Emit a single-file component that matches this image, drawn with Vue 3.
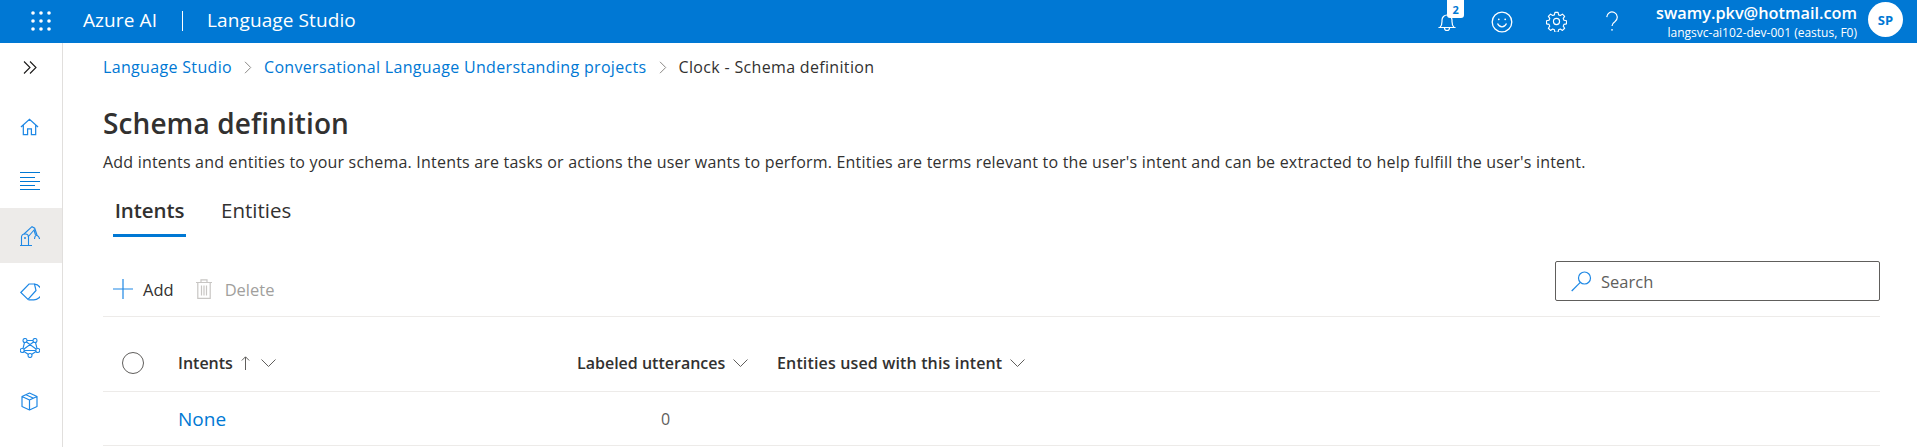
<script setup>
const navItems = [
  { id: 'home', active: false },
  { id: 'list', active: false },
  { id: 'robot', active: true },
  { id: 'tag', active: false },
  { id: 'net', active: false },
  { id: 'box', active: false },
  { id: 'more', active: false }
]
</script>

<template>
  <div class="page">
    <header class="topbar">
      <div class="waffle">
        <svg width="20" height="20" viewBox="0 0 20 20" fill="#fff">
          <g>
            <circle cx="2" cy="2" r="1.8" /><circle cx="10" cy="2" r="1.8" /><circle cx="18" cy="2" r="1.8" />
            <circle cx="2" cy="10" r="1.8" /><circle cx="10" cy="10" r="1.8" /><circle cx="18" cy="10" r="1.8" />
            <circle cx="2" cy="18" r="1.8" /><circle cx="10" cy="18" r="1.8" /><circle cx="18" cy="18" r="1.8" />
          </g>
        </svg>
      </div>
      <span class="brand">Azure AI</span>
      <span class="sep"></span>
      <span class="brand">Language Studio</span>
      <div class="spacer"></div>
      <div class="top-icon bell">
        <svg width="20" height="22" viewBox="0 0 20 22" fill="none" stroke="#fff" stroke-width="1.2">
          <path d="M3 16.5c1.5-1.5 2-3 2-6V9a5 5 0 0 1 10 0v1.500c0 3 .5 4.500 2 6z" />
          <path d="M1.500 16.500h17M7.500 17a2.500 2.500 0 0 0 5 0" />
        </svg>
        <span class="badge">2</span>
      </div>
      <div class="top-icon">
        <svg width="22" height="22" viewBox="0 0 22 22" fill="none" stroke="#fff" stroke-width="1.3">
          <circle cx="11" cy="11" r="9.800" />
          <path d="M6.500 12.500c1 2.200 2.700 3.300 4.500 3.300s3.500-1.100 4.500-3.300" />
          <circle cx="7.800" cy="8.300" r=".9" fill="#fff" stroke="none" />
          <circle cx="14.200" cy="8.300" r=".9" fill="#fff" stroke="none" />
        </svg>
      </div>
      <div class="top-icon">
        <svg width="21" height="21" viewBox="0 0 24 24" fill="none" stroke="#fff" stroke-width="1.300" stroke-linejoin="round">
          <circle cx="12" cy="12" r="3.500" />
          <path d="M10.200 1.500h3.600l.6 2.900 2 .8 2.400-1.600 2.500 2.500-1.600 2.400.8 2 2.900.6v3.600l-2.900.6-.8 2 1.600 2.400-2.500 2.500-2.400-1.600-2 .8-.6 2.900h-3.600l-.6-2.900-2-.8-2.400 1.600-2.500-2.500 1.600-2.400-.8-2-2.900-.6v-3.600l2.900-.6.8-2-1.600-2.400 2.500-2.500 2.400 1.600 2-.8z" />
        </svg>
      </div>
      <div class="top-icon">
        <svg width="14" height="21" viewBox="0 0 16 24" fill="none" stroke="#fff" stroke-width="1.400">
          <path d="M2 7a6 6 0 1 1 9.500 4.900C9 13.600 8 14.500 8 17" />
          <circle cx="8" cy="21.500" r="1" fill="#fff" stroke="none" />
        </svg>
      </div>
      <div class="account">
        <div class="email">swamy.pkv@hotmail.com</div>
        <div class="resource">langsvc-ai102-dev-001 (eastus, F0)</div>
      </div>
      <div class="avatar">SP</div>
    </header>

    <div class="body">
      <nav class="sidebar">
        <div class="collapse">
          <svg width="14" height="13" viewBox="0 0 14 13" fill="none" stroke="#1b1a19" stroke-width="1.100">
            <path d="M1 .5 7 6.500 1 12.500M7 .5 13 6.500 7 12.500" />
          </svg>
        </div>
        <div v-for="item in navItems" :key="item.id" class="nav-item" :class="[item.id, { active: item.active }]">
          <svg v-if="item.id === 'home'" width="19" height="18" viewBox="0 0 20 18" fill="none" stroke="#1e88e5" stroke-width="1.300">
            <path d="M1 9 10 1l9 8M3.500 7v10h4.500v-6h4v6h4.500V7" />
          </svg>
          <svg v-else-if="item.id === 'list'" width="20" height="18" viewBox="0 0 20 18" fill="none" stroke="#0078d4" stroke-width="1">
            <path d="M0 .5h20M0 5.500h15M0 9.500h20M0 13.500h15M0 17.500h20" />
          </svg>
          <svg v-else-if="item.id === 'robot'" width="20" height="20" viewBox="0 0 20 20" fill="none" stroke="#1e88e5" stroke-width="1.100">
            <path d="M0 19.500h12M1.500 19v-8a3 3 0 0 1 3-3h1a3 3 0 0 1 3 3v8" />
            <path d="M4 8 12 .7l2.700 1.500L17 9M8 11l6-7 1.500 5" />
            <path d="M14.500 13c0-2 1-3.500 2-4 1 .5 3 2 3 4" />
            <circle cx="5" cy="12" r="1" fill="#1e88e5" stroke="none" />
          </svg>
          <svg v-else-if="item.id === 'tag'" width="20" height="18" viewBox="0 0 20 18" fill="none" stroke="#1e88e5" stroke-width="1.200">
            <path d="M.8 9.500 9 1h5.500l1.500 6.500L8 16.500z" />
            <path d="M14.500 1.200A7.800 7.800 0 0 1 13 16.800H8.500" />
          </svg>
          <svg v-else-if="item.id === 'net'" width="20" height="20" viewBox="0 0 20 20" fill="none" stroke="#1e88e5" stroke-width="1.100">
            <circle cx="5" cy="2.500" r="2" /><circle cx="15" cy="2.500" r="2" />
            <circle cx="2.200" cy="12.500" r="2" /><circle cx="17.800" cy="12.500" r="2" /><circle cx="10" cy="17.500" r="2" />
            <path d="M7 2.500h6M4.500 4.500 3 10.500M15.500 4.500l1.500 6M4 13.500l4.500 3M16 13.500l-4.500 3M4.200 12.500h11.600M6.500 4l9.500 7M13.500 4 4 11" />
          </svg>
          <svg v-else-if="item.id === 'box'" width="17" height="19" viewBox="0 0 17 19" fill="none" stroke="#1e88e5" stroke-width="1.200" stroke-linejoin="round">
            <path d="M8.500 1 16 4.500v10L8.500 18 1 14.500v-10zM1 4.500 8.500 8 16 4.500M8.500 8v10M5 2.700l7.500 3.500" />
          </svg>
          <svg v-else width="18" height="18" viewBox="0 0 18 18" fill="none" stroke="#1e88e5" stroke-width="1.200">
            <path d="M0 .6h4.500M6.500 .6h4.500M13 .6h5" />
          </svg>
        </div>
      </nav>

      <main class="content">
        <div class="crumbs">
          <a class="crumb">Language Studio</a>
          <svg class="crumb-sep" width="8" height="13" viewBox="0 0 8 13" fill="none" stroke="#8a8886" stroke-width="1"><path d="M1 .8 6.700 6.500 1 12.200" /></svg>
          <a class="crumb">Conversational Language Understanding projects</a>
          <svg class="crumb-sep" width="8" height="13" viewBox="0 0 8 13" fill="none" stroke="#8a8886" stroke-width="1"><path d="M1 .8 6.700 6.500 1 12.200" /></svg>
          <span class="crumb-current">Clock - Schema definition</span>
        </div>

        <h1 class="title">Schema definition</h1>
        <p class="desc">Add intents and entities to your schema. Intents are tasks or actions the user wants to perform. Entities are terms relevant to the user's intent and can be extracted to help fulfill the user's intent.</p>

        <div class="tabs">
          <div class="tab selected">Intents</div>
          <div class="tab">Entities</div>
        </div>

        <div class="toolbar">
          <button class="tool">
            <svg width="20" height="20" viewBox="0 0 20 20" stroke="#1e88e5" stroke-width="1.200"><path d="M10 0v20M0 10h20" /></svg>
            <span>Add</span>
          </button>
          <button class="tool disabled">
            <svg width="16" height="20" viewBox="0 0 16 20" fill="none" stroke="#c8c6c4" stroke-width="1.200">
              <path d="M0 3.500h16M5 3V.8h6V3M1.800 3.500V19.400h12.400V3.500M5.500 6.500v10M8 6.500v10M10.500 6.500v10" />
            </svg>
            <span>Delete</span>
          </button>
          <div class="spacer"></div>
          <div class="search">
            <svg width="21" height="21" viewBox="0 0 21 21" fill="none" stroke="#1e88e5" stroke-width="1.200">
              <circle cx="13.500" cy="7" r="6" /><path d="M9.300 11.300.7 20" />
            </svg>
            <span>Search</span>
          </div>
        </div>

        <div class="grid head">
          <div class="check"><span class="circle"></span></div>
          <div class="th">
            <span>Intents</span>
            <svg width="9" height="14" viewBox="0 0 9 14" fill="none" stroke="#605e5c" stroke-width="1"><path d="M4.500 14V1M.8 4.500 4.500 .8l3.700 3.700" /></svg>
            <svg class="chev" width="15" height="8" viewBox="0 0 15 8" fill="none" stroke="#605e5c" stroke-width="1"><path d="M.5 .5l7 7 7-7" /></svg>
          </div>
          <div class="th">
            <span>Labeled utterances</span>
            <svg width="15" height="8" viewBox="0 0 15 8" fill="none" stroke="#605e5c" stroke-width="1"><path d="M.5 .5l7 7 7-7" /></svg>
          </div>
          <div class="th">
            <span class="wide">Entities used with this intent</span>
            <svg width="15" height="8" viewBox="0 0 15 8" fill="none" stroke="#605e5c" stroke-width="1"><path d="M.5 .5l7 7 7-7" /></svg>
          </div>
        </div>
        <div class="grid row">
          <div></div>
          <a class="name">None</a>
          <div class="count">0</div>
          <div></div>
        </div>
      </main>
    </div>
  </div>
</template>

<style>
html, body { margin: 0; height: 447px; overflow: hidden; background: #fff; }
</style>

<style scoped>
.page { width: 1917px; height: 447px; overflow: hidden; font-family: "Open Sans", "Noto Sans", sans-serif; color: #323130; }
.topbar { height: 43px; background: #0078d4; color: #fff; display: flex; align-items: center; padding-left: 31px; padding-right: 14px; box-sizing: border-box; }
.waffle { width: 20px; height: 20px; margin: 0 32px 2px 0; }
.brand { font-size: 19px; letter-spacing: .1px; white-space: nowrap; margin-bottom: 3px; }
.sep { width: 1px; height: 20px; background: #fff; margin: 0 24px 2px 25px; }
.spacer { flex: 1; }
.top-icon { width: 55px; height: 43px; display: flex; align-items: center; justify-content: center; position: relative; }
.badge { position: absolute; left: 28px; top: 0; width: 17px; height: 18px; border-radius: 0 0 3px 3px; background: #fff; color: #0078d4; font-size: 11px; font-weight: 700; display: flex; align-items: center; justify-content: center; }
.account { margin-left: 17px; text-align: right; white-space: nowrap; }
.email { font-size: 16.300px; font-weight: 600; line-height: 21px; }
.resource { font-size: 12px; line-height: 17px; }
.avatar { width: 35px; height: 35px; margin: 0 0 4px 11px; border-radius: 50%; background: #fff; color: #0078d4; font-size: 13px; font-weight: 700; display: flex; align-items: center; justify-content: center; }
.body { display: flex; height: 404px; }
.sidebar { width: 63px; flex: none; box-sizing: border-box; border-right: 1px solid #e1dfdd; }
.collapse { height: 48px; display: flex; align-items: center; justify-content: center; padding-right: 3px; margin-bottom: 7px; }
.nav-item { height: 55px; display: flex; align-items: center; justify-content: center; padding-right: 3px; }
.nav-item.active { background: #edebe9; }
.nav-item.home svg { margin-top: 3px; }
.nav-item.tag svg, .nav-item.box svg { margin-top: 2px; }
.nav-item.net svg { margin-top: 4px; }
.content { flex: 1; padding: 0 37px 0 40px; min-width: 0; }
.crumbs { display: flex; align-items: center; height: 48px; font-size: 16px; letter-spacing: .33px; white-space: nowrap; }
.crumb { color: #0078d4; }
.crumb-sep { margin: 0 12px; }
.crumb-current { color: #323130; }
.title { margin: 0; height: 59px; padding-top: 10px; box-sizing: border-box; font-size: 28px; font-weight: 600; line-height: 44px; letter-spacing: .1px; }
.desc { margin: 0; height: 43px; line-height: 24px; font-size: 16px; letter-spacing: .2px; white-space: nowrap; }
.tabs { display: flex; padding-left: 10px; height: 44px; box-sizing: border-box; }
.tab { font-size: 20.500px; line-height: 34px; margin-right: 35px; height: 44px; box-sizing: border-box; white-space: nowrap; }
.tab.selected { border-bottom: 3px solid #0078d4; font-weight: 600; width: 73px; text-align: center; letter-spacing: -.1px; }
.toolbar { margin-top: 24px; height: 56px; box-sizing: border-box; border-bottom: 1px solid #edebe9; display: flex; align-items: flex-start; }
.tool { display: flex; align-items: center; border: 0; background: none; padding: 0; margin: 18px 0 0 10px; height: 20px; font: inherit; font-size: 16.500px; color: #323130; }
.tool svg { margin-right: 10px; }
.tool.disabled { color: #a19f9d; margin-left: 22px; }
.tool.disabled svg { margin-right: 13px; }
.search { width: 325px; height: 40px; box-sizing: border-box; border: 1px solid #605e5c; border-radius: 2px; display: flex; align-items: center; padding-left: 15px; font-size: 16.500px; color: #605e5c; }
.search svg { margin-right: 9px; }
.grid { display: grid; grid-template-columns: 75px 399px 200px 1fr; border-bottom: 1px solid #edebe9; align-items: center; box-sizing: border-box; }
.head { height: 75px; padding-top: 18px; }
.row { height: 54px; }
.check { padding-left: 19px; display: flex; }
.circle { width: 22px; height: 22px; box-sizing: border-box; border: 1.500px solid #605e5c; border-radius: 50%; }
.th { display: flex; align-items: center; font-size: 16px; font-weight: 600; white-space: nowrap; }
.th svg { margin-left: 8px; }
.th .chev { margin-left: 11px; }
.th .wide { letter-spacing: .15px; }
.name { color: #0078d4; font-size: 19px; }
.count { color: #605e5c; font-size: 16px; padding-left: 84px; }
</style>
